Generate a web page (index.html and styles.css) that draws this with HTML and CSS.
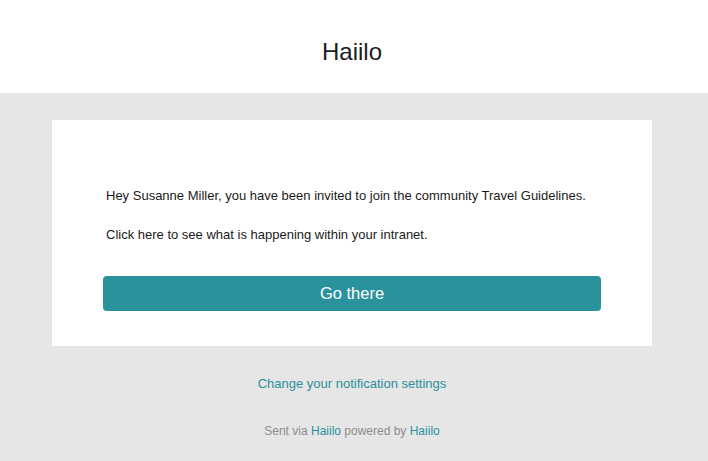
FILE: index.html
```html
<!DOCTYPE html>
<html lang="en">

<head>
  <meta charset="utf-8">
  <title>Haiilo</title>
  <link rel="stylesheet" href="styles.css">
</head>

<body>
  <!-- 顶部标题 -->
  <div class="header">
    <h1>Haiilo</h1>
  </div>

  <!-- 灰色背景区域 -->
  <div class="main">
    <div class="card">
      <p>Hey Susanne Miller, you have been invited to join the community Travel Guidelines.</p>
      <p>Click here to see what is happening within your intranet.</p>
      <a class="button" href="#">Go there</a>
    </div>

    <div class="footer">
      <a class="settings" href="#">Change your notification settings</a>
      <p class="sent">Sent via <a href="#">Haiilo</a> powered by <a href="#">Haiilo</a></p>
    </div>
  </div>
</body>

</html>
```

FILE: styles.css
```css
* {
  margin: 0;
  padding: 0;
}

body {
  font-family: "Liberation Sans", Arial, sans-serif;
  color: #1a1a1a;
  background: #e6e6e6;
  /* 右边留出滚动条的位置 */
  padding-right: 4px;
}

a {
  color: #2a8f9b;
  text-decoration: none;
}

/* 顶部白色标题栏 */
.header {
  height: 93px;
  box-sizing: border-box;
  padding-top: 10px;
  background: #fff;
  display: flex;
  align-items: center;
  justify-content: center;
  margin-right: -4px;
  padding-right: 4px;
}

.header h1 {
  font-size: 24px;
  font-weight: normal;
  color: #1c1c1c;
}

.main {
  padding-top: 27px;
  padding-bottom: 20px;
}

/* 中间的白色卡片 */
.card {
  width: 600px;
  box-sizing: border-box;
  margin: 0 auto;
  background: #fff;
  padding: 68px 51px 35px;
}

.card p {
  font-size: 13px;
  line-height: 16px;
  padding-left: 3px;
  margin-bottom: 23px;
}

.button {
  display: block;
  margin-top: 33px;
  height: 35px;
  line-height: 35px;
  border-radius: 4px;
  background: #2a929d;
  color: #fff;
  text-align: center;
  font-size: 16.5px;
}

/* 底部链接 */
.footer {
  text-align: center;
  padding-top: 28px;
}

.settings {
  font-size: 13px;
  line-height: 16px;
}

.sent {
  margin-top: 32px;
  font-size: 12px;
  line-height: 15px;
  color: #8c8c8c;
}
```
